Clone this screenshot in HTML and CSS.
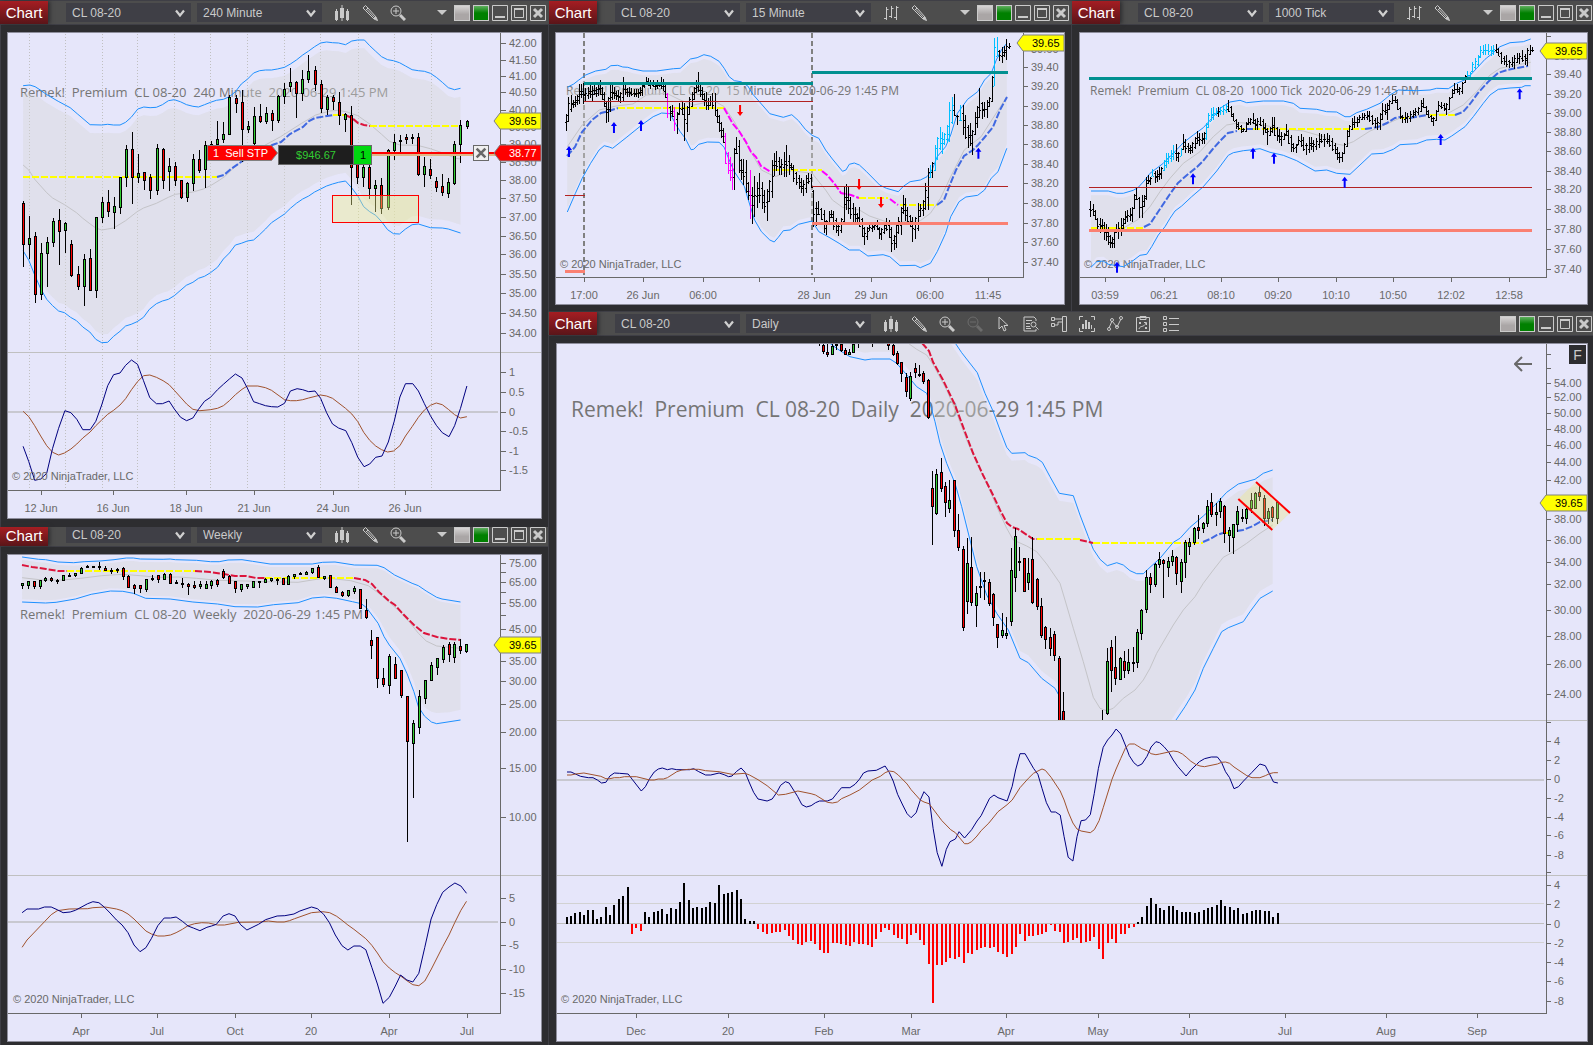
FILE: index.html
```html
<!DOCTYPE html>
<html lang="en">
<head>
    <meta charset="utf-8">
    <title>CL 08-20 Charts</title>
    <link rel="stylesheet" href="styles.css">
</head>
<body>
    <svg class="sprite" aria-hidden="true">
        <symbol id="i-chevron" viewBox="0 0 10 8"><path d="M1 1.500l4 5 4-5" fill="none" stroke="#d0d0d0" stroke-width="2.200"/></symbol>
        <symbol id="i-candles" viewBox="0 0 16 16"><path d="M1 6h3v9H1zM6 3h4v10H6zM12 6h3v9h-3z"/><path d="M2.500 4v12M8 0v16M13.500 4v12" class="thin"/></symbol>
        <symbol id="i-bars" viewBox="0 0 16 16"><path class="thin" d="M3.500 2v13M1 13.500h2M3.500 4.500h2M8.500 1v12M6 11.500h2M8.500 3.500h2M13.500 1v14M11 12.500h2M13.500 2.500h2"/></symbol>
        <symbol id="i-pencil" viewBox="0 0 16 16"><path class="thin" d="M1 3l2.500-2.500L6 3 3.500 5.500zM3.500 5.500L12 14l3.500 1.500L14 12 6 3M5 4.500l8 8.500M12 14l2-2"/><path d="M12.500 13.500l1.500-1.500 1.500 3.500z"/></symbol>
        <symbol id="i-zoom-in" viewBox="0 0 16 16"><circle class="thin" cx="6" cy="6" r="5"/><path class="thin" d="M3 6h6M6 3v6"/><path class="thick" d="M10 10l5 5"/></symbol>
        <symbol id="i-zoom-out" viewBox="0 0 16 16"><circle class="thin" cx="6" cy="6" r="5"/><path class="thin" d="M3 6h6"/><path class="thick" d="M10 10l5 5"/></symbol>
        <symbol id="i-cursor" viewBox="0 0 16 16"><path class="thin" d="M4 1v12l3-3 2 5 2-1-2-4.500h4z"/></symbol>
        <symbol id="i-report" viewBox="0 0 16 16"><path class="thin" d="M13 5V3l-2-2H1v14h12v-2M3 4.500h6M3 7.500h4M3 10.500h4M3 12.500h5"/><circle class="thin" cx="10.500" cy="8.500" r="2.500"/><path class="thin" d="M12.500 10.500l3 3"/></symbol>
        <symbol id="i-trader" viewBox="0 0 16 16"><path class="thin" d="M11.500 .5h4v15h-4zM.5 1.500h3v3h-3zM.5 7.500h3v3h-3zM4 3h7M4 9h3V6h4"/></symbol>
        <symbol id="i-indicator" viewBox="0 0 16 16"><path class="thin" d="M.5 4V.5H4M12 .5h3.500V4M15.500 12v3.500H12M4 15.500H.5V12"/><path d="M3 8h2v5H3zM6 4h2v9H6zM9 6h2v7H9zM12 9h1v4h-1z"/></symbol>
        <symbol id="i-strategy" viewBox="0 0 16 16"><path class="thin" d="M2 12l3-7 5 6 4-8"/><circle class="thin" cx="2" cy="13" r="1.500"/><circle class="thin" cx="5" cy="4" r="1.500"/><circle class="thin" cx="10" cy="11" r="1.500"/><circle class="thin" cx="14" cy="2" r="1.500"/></symbol>
        <symbol id="i-clipboard" viewBox="0 0 16 16"><path class="thin" d="M1.500 1.500h13v14h-13zM5 .5h6v3H5zM4 6l2 2M6 6l-2 2M10 11l2 2M12 11l-2 2M4 13c1-4 5-1 7-6M9 6.500h2.500V9"/></symbol>
        <symbol id="i-list" viewBox="0 0 16 16"><path class="thin" d="M.5 .5h3v3h-3zM.5 6.500h3v3h-3zM.5 12.500h3v3h-3zM6 2.500h10M6 8.500h10M6 14.500h10"/></symbol>
        <symbol id="i-minimize" viewBox="0 0 16 16"><path class="thin" d="M.5 .5h15v15H.5z"/><path d="M3 11h10v2H3z"/></symbol>
        <symbol id="i-maximize" viewBox="0 0 16 16"><path class="thin" d="M.5 .5h15v15H.5zM3.500 4.500h9v8h-9z"/><path d="M3 3h10v2H3z"/></symbol>
        <symbol id="i-close" viewBox="0 0 16 16"><path class="thin" d="M.5 .5h15v15H.5z"/><path d="M4 4l8 8M12 4l-8 8" fill="none" stroke="currentColor" stroke-width="3"/></symbol>
    </svg>

    <div class="desktop">
        <div class="column left">
            <section class="window tall-foot">
                <header class="toolbar">
                    <span class="tab">Chart</span>
                    <div class="picker"><select aria-label="Instrument"><option>CL 08-20</option></select><svg><use href="#i-chevron"/></svg></div>
                    <div class="picker"><select aria-label="Interval"><option>240 Minute</option></select><svg><use href="#i-chevron"/></svg></div>
                    <div class="tools">
                        <button aria-label="Chart style"><svg><use href="#i-candles"/></svg></button>
                        <button aria-label="Drawing tools"><svg><use href="#i-pencil"/></svg></button>
                        <button aria-label="Zoom in"><svg><use href="#i-zoom-in"/></svg></button>
                    </div>
                    <button class="more" aria-label="More tools"></button>
                    <div class="window-buttons">
                        <button class="link" aria-label="Instrument link"></button>
                        <button class="link green" aria-label="Interval link"></button>
                        <button aria-label="Minimize"><svg><use href="#i-minimize"/></svg></button>
                        <button aria-label="Maximize"><svg><use href="#i-maximize"/></svg></button>
                        <button aria-label="Close"><svg><use href="#i-close"/></svg></button>
                    </div>
                </header>
                <div class="chart">
                    <svg id="minute240" viewBox="8 33 533 485" preserveAspectRatio="xMinYMin"></svg>
                    <button class="cancel-order" aria-label="Cancel order"><svg viewBox="0 0 16 16"><path d="M3 3l10 10M13 3L3 13"/></svg></button>
                </div>
            </section>

            <section class="window clipped">
                <header class="toolbar">
                    <span class="tab">Chart</span>
                    <div class="picker"><select aria-label="Instrument"><option>CL 08-20</option></select><svg><use href="#i-chevron"/></svg></div>
                    <div class="picker"><select aria-label="Interval"><option>Weekly</option></select><svg><use href="#i-chevron"/></svg></div>
                    <div class="tools">
                        <button aria-label="Chart style"><svg><use href="#i-candles"/></svg></button>
                        <button aria-label="Drawing tools"><svg><use href="#i-pencil"/></svg></button>
                        <button aria-label="Zoom in"><svg><use href="#i-zoom-in"/></svg></button>
                    </div>
                    <button class="more" aria-label="More tools"></button>
                    <div class="window-buttons">
                        <button class="link" aria-label="Instrument link"></button>
                        <button class="link green" aria-label="Interval link"></button>
                        <button aria-label="Minimize"><svg><use href="#i-minimize"/></svg></button>
                        <button aria-label="Maximize"><svg><use href="#i-maximize"/></svg></button>
                        <button aria-label="Close"><svg><use href="#i-close"/></svg></button>
                    </div>
                </header>
                <div class="chart">
                    <svg id="weekly" viewBox="8 555 533 486" preserveAspectRatio="xMinYMin"></svg>
                </div>
            </section>
        </div>

        <div class="column right">
            <div class="pair">
                <section class="window mid-foot">
                    <header class="toolbar">
                        <span class="tab">Chart</span>
                        <div class="picker"><select aria-label="Instrument"><option>CL 08-20</option></select><svg><use href="#i-chevron"/></svg></div>
                        <div class="picker"><select aria-label="Interval"><option>15 Minute</option></select><svg><use href="#i-chevron"/></svg></div>
                        <div class="tools">
                            <button aria-label="Chart style"><svg><use href="#i-bars"/></svg></button>
                            <button aria-label="Drawing tools"><svg><use href="#i-pencil"/></svg></button>
                        </div>
                        <button class="more" aria-label="More tools"></button>
                        <div class="window-buttons">
                            <button class="link" aria-label="Instrument link"></button>
                            <button class="link green" aria-label="Interval link"></button>
                            <button aria-label="Minimize"><svg><use href="#i-minimize"/></svg></button>
                            <button aria-label="Maximize"><svg><use href="#i-maximize"/></svg></button>
                            <button aria-label="Close"><svg><use href="#i-close"/></svg></button>
                        </div>
                    </header>
                    <div class="chart">
                        <svg id="minute15" viewBox="556 33 508 271" preserveAspectRatio="xMinYMin"></svg>
                    </div>
                </section>

                <section class="window mid-foot edge">
                    <header class="toolbar">
                        <span class="tab">Chart</span>
                        <div class="picker"><select aria-label="Instrument"><option>CL 08-20</option></select><svg><use href="#i-chevron"/></svg></div>
                        <div class="picker"><select aria-label="Interval"><option>1000 Tick</option></select><svg><use href="#i-chevron"/></svg></div>
                        <div class="tools">
                            <button aria-label="Chart style"><svg><use href="#i-bars"/></svg></button>
                            <button aria-label="Drawing tools"><svg><use href="#i-pencil"/></svg></button>
                        </div>
                        <button class="more" aria-label="More tools"></button>
                        <div class="window-buttons">
                            <button class="link" aria-label="Instrument link"></button>
                            <button class="link green" aria-label="Interval link"></button>
                            <button aria-label="Minimize"><svg><use href="#i-minimize"/></svg></button>
                            <button aria-label="Maximize"><svg><use href="#i-maximize"/></svg></button>
                            <button aria-label="Close"><svg><use href="#i-close"/></svg></button>
                        </div>
                    </header>
                    <div class="chart">
                        <svg id="tick1000" viewBox="1080 33 507 271" preserveAspectRatio="xMinYMin"></svg>
                    </div>
                </section>
            </div>

            <section class="window edge">
                <header class="toolbar">
                    <span class="tab">Chart</span>
                    <div class="picker"><select aria-label="Instrument"><option>CL 08-20</option></select><svg><use href="#i-chevron"/></svg></div>
                    <div class="picker"><select aria-label="Interval"><option>Daily</option></select><svg><use href="#i-chevron"/></svg></div>
                    <div class="tools">
                        <button aria-label="Chart style"><svg><use href="#i-candles"/></svg></button>
                        <button aria-label="Drawing tools"><svg><use href="#i-pencil"/></svg></button>
                        <button aria-label="Zoom in"><svg><use href="#i-zoom-in"/></svg></button>
                        <button aria-label="Zoom out" disabled><svg><use href="#i-zoom-out"/></svg></button>
                        <button aria-label="Cursor"><svg><use href="#i-cursor"/></svg></button>
                        <button aria-label="Data box"><svg><use href="#i-report"/></svg></button>
                        <button aria-label="Chart trader"><svg><use href="#i-trader"/></svg></button>
                        <button aria-label="Indicators"><svg><use href="#i-indicator"/></svg></button>
                        <button aria-label="Data series"><svg><use href="#i-strategy"/></svg></button>
                        <button aria-label="Strategies"><svg><use href="#i-clipboard"/></svg></button>
                        <button aria-label="Properties"><svg><use href="#i-list"/></svg></button>
                    </div>
                    <div class="window-buttons">
                        <button class="link" aria-label="Instrument link"></button>
                        <button class="link green" aria-label="Interval link"></button>
                        <button aria-label="Minimize"><svg><use href="#i-minimize"/></svg></button>
                        <button aria-label="Maximize"><svg><use href="#i-maximize"/></svg></button>
                        <button aria-label="Close"><svg><use href="#i-close"/></svg></button>
                    </div>
                </header>
                <div class="chart">
                    <svg id="daily" viewBox="557 344 1030 697" preserveAspectRatio="xMinYMin"></svg>
                    <button class="scroll-back" aria-label="Return to last bar"><svg viewBox="0 0 18 16"><path d="M18 8H1M8 1L1 8l7 7"/></svg></button>
                    <button class="fixed-scale">F</button>
                </div>
            </section>
        </div>
    </div>

    <script src="charts.js"></script>
</body>
</html>
```

FILE: styles.css
```css
* {
    box-sizing: border-box;
}

body {
    margin: 0;
    background: #2d2d30;
    font-family: "Liberation Sans", Arial, sans-serif;
    font-size: 12px;
    overflow: hidden;
}

.sprite {
    display: none;
}

button {
    padding: 0;
    border: 0;
    background: none;
    color: #cacaca;
    cursor: pointer;
}

button svg {
    display: block;
    width: 16px;
    height: 16px;
    fill: currentColor;
}

.thin {
    fill: none;
    stroke: currentColor;
    stroke-width: 1;
}

.thick {
    fill: none;
    stroke: currentColor;
    stroke-width: 3;
}

/* Window layout */

.desktop {
    display: grid;
    grid-template-columns: 548fr 1045fr;
    height: 100vh;
}

.column {
    display: grid;
    min-width: 0;
    min-height: 0;
}

.left {
    grid-template-rows: 527fr 518fr;
}

.right {
    grid-template-rows: 311fr 734fr;
}

.pair {
    display: grid;
    grid-template-columns: 523fr 522fr;
    min-height: 0;
}

.window {
    display: flex;
    flex-direction: column;
    min-width: 0;
    min-height: 0;
    padding-bottom: 3px;
    border-top: 1px solid #3f3f46;
    box-shadow: inset 1px 0 #3f3f46;
}

.tall-foot {
    padding-bottom: 8px;
}

.mid-foot {
    padding-bottom: 6px;
}

.clipped {
    border-top: 0;
}

/* Toolbar */

.toolbar {
    display: flex;
    align-items: center;
    flex: none;
    height: 24px;
    padding: 0 2px 0 1px;
    background: #4d4d4d;
    border-bottom: 1px solid #3f3f46;
}

.left .toolbar {
    padding-left: 0;
}

.edge .toolbar {
    padding-right: 1px;
}

.clipped .toolbar {
    align-items: flex-start;
    height: 20px;
}

.tab {
    display: flex;
    align-items: center;
    justify-content: center;
    align-self: stretch;
    width: 48px;
    margin-right: 12px;
    background: linear-gradient(#a51d22, #5a1519);
    box-shadow: 2px 0 4px #2d2d30;
    color: #fff;
    font-size: 15px;
}

.clipped .tab {
    padding-bottom: 3px;
}

.picker {
    display: grid;
    width: 125px;
    margin-left: 6px;
    align-items: center;
}

.picker select,
.picker svg {
    grid-area: 1 / 1;
}

.picker select {
    appearance: none;
    height: 19px;
    padding: 0 6px;
    border: 0;
    border-radius: 0;
    background: #3f3f46;
    color: #cacaca;
    font: 12px "Liberation Sans", Arial, sans-serif;
}

.clipped .picker select {
    height: 16px;
}

.picker svg {
    justify-self: end;
    width: 10px;
    height: 8px;
    margin-right: 6px;
    pointer-events: none;
}

.tools {
    display: flex;
    gap: 12px;
    margin-left: 12px;
}

.tools button:disabled {
    color: #6c6c6c;
}

.more {
    width: 0;
    height: 0;
    margin-left: auto;
    margin-right: 7px;
    border: 5px solid transparent;
    border-top: 5px solid #cacaca;
    border-bottom: 0;
}

.clipped .more {
    margin-top: 5px;
}

.window-buttons {
    display: flex;
    gap: 3px;
    margin-left: auto;
}

.more + .window-buttons {
    margin-left: 0;
}

.link {
    width: 16px;
    height: 16px;
    border: 1px solid #cacaca;
    background: linear-gradient(#d6d4d4, #aaa6a6 60%);
}

.link.green {
    background: linear-gradient(#5fae5f, #008000 50%);
}

/* Chart */

.chart {
    position: relative;
    flex: 1;
    min-height: 0;
    margin: 7px 6px 0 7px;
    border: 1px solid #8e8e9c;
    background: #e6e6fa;
}

.edge .chart {
    margin-left: 8px;
    margin-right: 5px;
}

.chart > svg {
    display: block;
    width: 100%;
    height: 100%;
}

.chart text {
    white-space: pre;
}

.axis-label,
.copyright,
.tag-text {
    font-size: 11px;
    fill: #696969;
}

.tag-text {
    fill: #000;
}

.tag-text.light {
    fill: #fff;
}

.tag-text.profit {
    fill: #32cd32;
}

.watermark {
    font-family: "Open Sans", sans-serif;
    font-size: 13px;
    fill: #757575;
}

.watermark.small {
    font-size: 12px;
}

.watermark.large {
    font-size: 21px;
}

.cancel-order {
    position: absolute;
    left: 465px;
    top: 112px;
    border: 1px solid #696969;
    background: #f0f0f0;
}

.cancel-order svg {
    width: 14px;
    height: 14px;
    fill: none;
    stroke: #696969;
    stroke-width: 3;
}

.scroll-back {
    position: absolute;
    right: 55px;
    top: 12px;
}

.scroll-back svg {
    width: 18px;
    fill: none;
    stroke: #696969;
    stroke-width: 2;
}

.fixed-scale {
    position: absolute;
    right: 1px;
    top: 1px;
    width: 17px;
    height: 19px;
    background: #2d2d30;
    font: 14px "Liberation Sans", Arial, sans-serif;
}
```

FILE: charts.js
```js
const NS = 'http://www.w3.org/2000/svg';
const BLUE = '#1e90ff', TREND = '#4169e1', YELLOW = '#ffff00', CRIMSON = '#dc143c', PINK = '#ff00ff';
const AXIS = '#696969', GRID = '#c0c0c0';

// A frame turns stored plot units into chart pixels
const frame = (x0, y0, sx) => (x, y) => [x0 + x / sx, y0 + y / 3];

function el(parent, name, attrs, text) {
    const node = document.createElementNS(NS, name);
    for (const key in attrs) node.setAttribute(key, attrs[key]);
    if (text !== undefined) node.textContent = text;
    parent.appendChild(node);
    return node;
}

const parse = str => str.trim().split(/\s+/).map(p => p.split(',').map(Number));
const toPoints = (f, pts, dy = 0) => pts.map(([x, y]) => f(x, y + dy).map(v => v.toFixed(1)).join(',')).join(' ');
const snap = v => Math.round(v);

function line(g, f, str, color, width = 1) {
    return el(g, 'polyline', { points: toPoints(f, parse(str)), fill: 'none', stroke: color, 'stroke-width': width });
}

// Two pixel dashes sit on whole pixels so the flat stretches stay sharp
function dashes(g, f, parts) {
    parts.forEach(([color, str]) => {
        const points = parse(str).map(([x, y]) => f(x, y).map(snap).join(',')).join(' ');
        el(g, 'polyline', { points, fill: 'none', stroke: color, 'stroke-width': 2, 'stroke-dasharray': '7 2' });
    });
}

function box(g, x, y, w, h, fill) {
    el(g, 'rect', { x: snap(x), y: snap(y), width: w, height: Math.max(1, snap(h)), fill: fill, 'shape-rendering': 'crispEdges' });
}

function level(g, f, x1, x2, y, color, width) {
    const a = f(x1, y), b = f(x2, y);
    box(g, a[0], a[1] - width / 2, snap(b[0] - a[0]), width, color);
}

// Shaded channel, pulled in from its two outer lines
function channel(g, f, c) {
    const top = toPoints(f, parse(c.upper), c.inset);
    const low = toPoints(f, parse(c.bandLow || c.lower).reverse(), c.bandLow ? 0 : -c.inset);
    el(g, 'polygon', { points: top + ' ' + low, fill: '#d7d7d7', 'fill-opacity': 0.4 });
    line(g, f, c.mid, '#c4c4c8');
    line(g, f, c.upper, BLUE);
    line(g, f, c.lower, BLUE);
}

function candle(g, f, x, h, t, b, l, up) {
    const cx = snap(f(x, 0)[0]);
    const [yh, yt, yb, yl] = [h, t, b, l].map(v => snap(f(x, v)[1]));
    box(g, cx, yh, 1, yl - yh, '#000');
    box(g, cx - 1, yt, 3, yb - yt + 1, '#000');
    if (yb - yt > 1) box(g, cx, yt + 1, 1, yb - yt - 1, up ? '#32cd32' : '#ff0000');
}

// "x high low [color]" bars with open and close ticks
function ohlc(g, f, str) {
    const bars = str.split(';').map(s => s.trim().split(' '));
    const colors = { c: '#00bfff', m: '#ff00ff' };
    bars.forEach(([x, h, l, k], i) => {
        h = +h; l = +l;
        const next = bars[i + 1] || bars[i], prev = bars[i - 1] || bars[i];
        const clamp = v => Math.min(l - 3, Math.max(h + 3, v));
        const open = clamp((+prev[1] + +prev[2]) / 2), close = clamp((+next[1] + +next[2]) / 2);
        const [px, yh] = f(+x, h), yl = f(0, l)[1], color = colors[k] || '#000', cx = snap(px);
        box(g, cx, yh, 1, yl - yh, color);
        box(g, cx - 1, f(0, open)[1], 1, 1, color);
        box(g, cx + 1, f(0, close)[1], 1, 1, color);
    });
}

function arrow(g, f, x, y, up) {
    const [px, py] = f(x, y), d = up ? 1 : -1;
    el(g, 'path', {
        d: `M${px} ${py}l3 ${4 * d}h-2v${7 * d}h-2v${-7 * d}h-2z`,
        fill: up ? '#0000ff' : '#ff0000'
    });
}

function priceAxis(g, f, x, labels) {
    labels.forEach(([y, text]) => {
        const [px, py] = f(x, y);
        box(g, px, py, 5, 1, AXIS);
        if (text) el(g, 'text', { x: snap(px) + 8, y: snap(py) + 4, class: 'axis-label' }, text);
    });
}

function timeAxis(g, f, y, labels) {
    labels.forEach(([x, text]) => {
        const [px, py] = f(x, y);
        box(g, px, py, 1, 5, AXIS);
        if (text) el(g, 'text', { x: snap(px), y: snap(py) + 22, 'text-anchor': 'middle', class: 'axis-label' }, text);
    });
}

function axisLines(g, left, x, top, bottom) {
    box(g, x, top, 1, bottom - top, AXIS);
    box(g, left, bottom, x - left + 1, 1, AXIS);
}

function priceTag(g, x, y, text, fill, cls) {
    el(g, 'path', { d: `M${x} ${y}l6 -8h41v16h-41z`, fill: fill, stroke: '#808080' });
    el(g, 'text', { x: x + 15, y: y + 4, class: 'tag-text ' + cls }, text);
}

const watermark = (g, x, y, text, cls = '') => el(g, 'text', { x, y, class: 'watermark ' + cls }, text);
const copyright = (g, x, y) => el(g, 'text', { x, y, class: 'copyright' }, '© 2020 NinjaTrader, LLC');

/* 240 minute */
function drawMinute240() {
    const g = document.getElementById('minute240');
    const f = frame(0, 0, 2.851), m = frame(0, 180, 2.851);
    [82, 184, 290, 392, 497, 600, 705, 811, 913, 1020, 1122, 1228].forEach(x => {
        const px = snap(x / 2.851) + 0.5;
        el(g, 'line', { x1: px, x2: px, y1: 34, y2: 488, stroke: GRID, 'stroke-dasharray': '1 2' });
    });
    watermark(g, 20, 97, 'Remek!  Premium  CL 08-20  240 Minute  2020-06-29 1:45 PM');
    channel(g, f, {
        inset: 25,
        upper: '66,257 85,255 100,260 115,270 132,283 166,304 200,323 220,341 257,374 290,375 307,373 324,375 342,375 358,367 374,352 393,327 410,321 428,323 446,322 463,314 480,302 497,299 514,305 532,314 550,319 566,321 583,314 600,307 617,301 637,298 654,290 671,275 688,252 705,238 723,219 740,212 757,210 774,210 791,207 811,202 828,192 845,180 863,165 880,153 897,140 914,129 931,126 948,128 965,129 985,134 1003,123 1020,120 1039,120 1054,137 1071,154 1088,170 1105,179 1122,182 1139,188 1156,198 1175,209 1193,212 1210,214 1227,220 1244,232 1261,247 1278,263 1296,269 1313,265',
        lower: '66,752 82,781 99,825 116,866 133,898 150,917 167,933 184,938 201,952 218,962 236,981 256,996 273,1018 290,1028 307,1027 324,1009 342,994 358,978 374,973 391,965 409,952 426,928 446,911 463,903 480,898 497,887 531,856 550,847 566,835 583,829 600,818 620,802 637,777 654,759 671,735 688,730 705,723 723,720 740,704 757,687 774,668 811,642 828,625 845,610 863,597 880,588 897,576 914,567 931,558 948,552 965,547 985,543 1003,564 1020,588 1037,620 1054,635 1071,646 1088,665 1105,689 1122,701 1139,702 1156,687 1175,674 1193,672 1227,683 1261,684 1278,687 1313,699',
        mid: '66,495 82,510 99,538 133,578 150,594 184,614 218,638 236,655 256,671 273,684 290,690 307,687 324,684 358,662 391,635 409,624 446,610 480,592 500,583 550,576 580,567 600,557 625,541 640,530 670,500 700,475 730,450 800,410 860,370 900,345 940,333 965,331 990,336 1020,347 1054,372 1088,403 1110,424 1140,435 1190,436 1227,446 1260,458 1300,475 1313,477'
    });
    dashes(g, f, [
        [YELLOW, '66,530 620,530'],
        [TREND, '620,530 640,524 660,508 688,487 710,470 760,440 785,433 800,425 828,402 863,380 880,363 897,353 948,345'],
        [YELLOW, '948,345 985,345'],
        [CRIMSON, '985,345 1003,355 1020,370 1037,376 1054,378'],
        [YELLOW, '1054,379 1313,379']
    ]);
    // high top bottom low up
    `603 610 733 800 0;648 715 733 777 1;697 708 881 908 0;729 760 881 899 1;712 727 760 860 1;654 664 727 741 1;627 661 694 794 0;666 670 691 758 1;721 733 824 830 0;798 823 859 869 0;762 778 859 917 1;747 775 871 871 0;652 652 871 893 1;592 607 652 669 1;570 607 632 650 0;591 619 635 687 1;530 532 622 641 1;435 447 530 560 1;397 447 530 612 0;462 519 530 548 1;517 517 541 570 0;522 530 571 596 0;432 444 571 584 1;444 446 540 566 0;474 499 512 572 1;487 499 540 558 0;540 540 592 596 0;546 550 592 605 1;462 478 550 573 1;450 478 511 520 0;424 436 508 564 1;424 432 450 456 1;363 418 432 440 1;367 402 418 430 1;285 292 403 403 1;286 295 308 340 0;270 307 386 487 0;364 378 386 400 1;321 349 430 445 1;312 349 362 368 0;322 339 364 372 1;330 339 361 392 0;285 289 361 368 1;249 267 289 312 1;204 247 258 276 1;242 247 280 353 0;210 238 280 302 1;165 213 238 250 1;198 210 253 273 0;240 253 325 340 0;285 291 328 345 1;285 292 304 330 0;277 307 344 374 0;338 343 356 397 1;319 346 500 614 0;480 490 532 552 0;480 500 532 562 1;495 500 565 596 0;540 556 565 635 1;535 555 623 641 0;448 451 622 630 1;403 427 451 480 1;406 420 424 457 1;402 411 418 432 0;402 411 415 432 1;400 411 521 527 0;471 499 521 562 1;477 507 524 536 0;530 544 560 577 0;522 558 576 587 0;535 547 578 595 1;424 433 548 555 1;361 376 433 488 1;361 364 377 386 1`
        .split(';').forEach((row, i) => candle(g, f, 65 + i * 17.33, ...row.split(' ').map(Number)));

    // Demand zone
    el(g, 'rect', { x: 332.5, y: 195.5, width: 86, height: 27, fill: '#f0f08c', 'fill-opacity': 0.4, stroke: '#ff0000' });

    // Oscillator
    box(g, 8, 352, 533, 1, GRID);
    box(g, 8, 411, 490, 2, '#c8c8d0');
    line(g, m, '66,694 82,710 99,737 116,768 133,797 150,817 167,825 184,819 202,807 219,792 236,774 257,756 273,737 290,720 307,703 324,691 342,675 358,656 375,629 392,605 409,587 427,585 446,592 465,602 482,614 497,631 532,672 550,688 570,692 600,689 620,685 637,677 654,662 671,644 690,628 705,618 735,618 757,623 774,631 811,659 828,662 845,662 863,659 880,654 914,645 931,648 948,655 985,685 1003,702 1020,725 1037,757 1054,781 1071,798 1088,809 1105,816 1122,813 1140,797 1156,768 1175,740 1193,712 1210,690 1227,676 1244,669 1261,674 1278,688 1296,704 1313,714 1331,710', '#a0522d');
    line(g, m, '66,799 82,845 99,901 116,897 133,880 150,805 167,745 185,692 202,698 219,718 236,749 257,749 273,724 290,675 307,617 324,584 342,579 358,556 375,540 392,553 409,602 427,653 446,671 463,671 482,663 497,687 515,712 532,722 550,714 566,688 583,664 600,652 620,629 637,613 654,597 671,582 690,594 705,624 723,665 740,671 757,677 774,680 792,681 811,670 828,633 847,626 863,629 880,635 898,633 914,655 931,698 948,732 965,744 986,752 1003,788 1020,832 1038,860 1054,852 1071,832 1089,828 1107,786 1124,724 1140,651 1156,611 1177,611 1193,633 1210,671 1227,707 1244,736 1261,758 1280,770 1296,737 1313,685 1331,618', '#000080');
    copyright(g, 12, 480);

    axisLines(g, 8, 500, 33, 490);
    priceAxis(g, f, 1427, [[128, '42.00'], [179, '41.50'], [227, '41.00'], [277, '40.50'], [329, '40.00'], [380, '39.50'], [433, '39.00'], [487, '38.50'], [539, '38.00'], [595, '37.50'], [650, '37.00'], [707, '36.50'], [761, '36.00'], [821, '35.50'], [878, '35.00'], [939, '34.50'], [998, '34.00'], [1116, '1'], [1175, '0.5'], [1235, '0'], [1292, '-0.5'], [1352, '-1'], [1411, '-1.5']]);
    timeAxis(g, f, 1471, [[116, '12 Jun'], [323, '16 Jun'], [531, '18 Jun'], [723, '21 Jun'], [948, '24 Jun'], [1156, '26 Jun']]);

    // Working stop order and open position
    box(g, 371, 154, 130, 2, '#deb887');
    box(g, 371, 152, 130, 2, '#ff0000');
    el(g, 'path', { d: 'M207.5 145.500h64l6 7.500l-6 7.500h-64z', fill: '#ff0000', stroke: '#808080' });
    el(g, 'text', { x: 213, y: 157, class: 'tag-text light' }, '1  Sell STP');
    el(g, 'rect', { x: 278.5, y: 145.5, width: 75, height: 19, fill: '#1e1e1e', stroke: '#696969' });
    el(g, 'rect', { x: 353.5, y: 145.5, width: 18, height: 19, fill: '#00d80f', stroke: '#696969' });
    el(g, 'text', { x: 316, y: 159, 'text-anchor': 'middle', class: 'tag-text profit' }, '$946.67');
    el(g, 'text', { x: 363, y: 159, 'text-anchor': 'middle', class: 'tag-text' }, '1');
    priceTag(g, 494, 121, '39.65', '#ffff00', '');
    priceTag(g, 494, 153, '38.77', '#ff0000', 'light');
}

/* 15 minute */
function drawMinute15() {
    const g = document.getElementById('minute15');
    const f = frame(545, 0, 2.958);
    watermark(g, 566, 95, 'Remek!  Premium  CL 08-20  15 Minute  2020-06-29 1:45 PM', 'small');
    [115, 790].forEach(x => {
        const px = snap(f(x, 0)[0]);
        el(g, 'line', { x1: px, x2: px, y1: 33, y2: 275, stroke: '#808080', 'stroke-width': 2, 'stroke-dasharray': '5 3' });
    });
    copyright(g, 560, 268);
    channel(g, f, {
        inset: 13,
        upper: '66,262 85,252 100,240 120,225 150,213 180,208 195,197 215,196 230,201 245,202 260,207 290,213 330,213 380,206 400,205 430,177 450,173 470,164 490,169 515,184 530,205 545,230 560,242 580,245 600,258 615,283 640,312 665,341 705,352 730,344 750,362 770,388 790,406 810,415 830,450 850,477 880,514 890,510 900,493 915,489 930,495 950,514 990,555 1010,565 1045,575 1060,559 1080,545 1110,540 1130,530 1145,510 1160,470 1185,440 1200,405 1220,340 1250,298 1280,275 1300,240 1320,220 1335,180 1350,150 1366,130',
        lower: '66,636 90,580 110,535 135,490 160,450 175,437 190,441 200,445 240,413 290,372 320,350 345,339 370,341 385,370 400,395 415,415 432,449 440,448 455,433 480,426 515,427 530,442 545,480 560,515 590,560 600,595 620,660 640,695 665,720 678,726 690,712 705,692 725,690 750,673 790,663 810,695 840,712 870,730 900,750 930,750 955,768 1000,764 1020,770 1050,797 1095,796 1110,803 1140,790 1160,755 1185,700 1200,650 1225,605 1245,591 1280,586 1300,570 1320,535 1340,515 1366,445',
        mid: '66,440 110,375 160,330 210,318 260,312 300,285 360,280 400,300 440,315 500,302 530,320 560,365 600,440 640,510 680,530 730,512 790,520 830,570 850,600 880,622 930,630 960,648 1000,662 1030,672 1060,665 1110,662 1140,640 1170,595 1200,530 1240,450 1290,410 1366,290'
    });
    dashes(g, f, [
        [TREND, '66,468 90,440 110,395 140,360 165,338 190,332 215,323'],
        [YELLOW, '215,324 530,324'],
        [PINK, '530,324 545,350 555,373 575,393 595,425 610,455 625,472 640,497 655,507 668,516'],
        [YELLOW, '675,510 820,510'],
        [PINK, '820,512 835,525 855,550 875,578 905,585 930,593'],
        [YELLOW, '930,594 1015,594'],
        [PINK, '1020,596 1045,614'],
        [YELLOW, '1050,614 1160,614'],
        [TREND, '1160,614 1180,600 1195,560 1215,510 1240,468 1265,450 1280,435 1300,415 1325,380 1345,330 1366,290']
    ]);
    ohlc(g, f, '63 342 392;69 290 366;76 285 335;82 300 325;88 288 322;94 285 315;100 252 312;106 252 295;113 250 312;119 265 303;126 262 297;132 250 295;138 258 305;144 252 285;150 262 293;157 245 287;163 240 285;169 262 300;175 275 320;180 305 368;186 290 364;192 245 335;199 252 300;205 262 298;211 272 300;217 270 303;223 275 307;230 232 303;236 250 285;242 264 290;249 262 292;255 265 290;262 268 293;268 268 292;275 266 292;282 262 290;288 252 288;294 245 262;300 230 255;306 235 258;312 240 268;318 240 262;324 246 270;331 240 268;337 246 262;344 230 265;350 238 275;356 255 295;362 280 356 m;369 318 362;375 315 350;383 320 392 m;390 335 402;396 308 345;404 302 345;411 310 425;419 318 395;427 290 345;434 275 320;440 262 300;446 240 280;452 216 275;458 248 290;464 262 300;471 280 318;477 275 330;483 295 332;489 288 318;495 278 325;502 280 350;509 328 370;516 345 395;522 365 412;528 385 430;533 398 492 m;540 455 520 m;546 472 545 m;552 490 572 m;559 445 570;566 412 462;573 420 520;580 478 542;587 478 555;594 480 578;600 545 600;605 510 658 m;611 560 670;619 528 650;627 545 622;634 520 610;641 545 625;648 570 640;656 568 665;663 540 605;670 480 595;678 460 530;684 452 512;691 470 525;698 478 525;706 455 530;714 435 532;721 465 525;728 490 510;735 495 545;742 515 555;750 525 568;757 535 580;764 540 588;771 525 580;779 518 550;786 522 565;794 570 680;802 605 678;809 602 645;817 625 660;824 630 698;832 660 705;840 632 675;847 630 655;853 632 690;861 655 700;868 670 708;876 655 700;883 560 665;889 552 630;896 560 640;903 590 655;910 610 672;917 620 665;924 640 670;930 620 680;937 655 712;944 680 735;951 680 718;959 670 695;966 668 695;973 665 690;981 660 690;988 680 715;995 685 720;1003 668 700;1010 655 695;1017 660 715;1024 682 758;1031 705 750;1038 670 745;1045 650 700;1052 622 705;1058 584 640;1065 595 665;1072 620 672;1080 645 680;1087 650 725;1095 650 715;1103 610 695;1110 612 650;1117 600 648;1124 550 632;1132 505 632;1139 495 535 c;1146 485 532;1153 435 512 c;1160 410 480 c;1167 380 450 c;1174 395 460 c;1181 400 435 c;1188 375 430 c;1196 305 425 c;1203 290 370 c;1210 282 348;1219 345 375;1227 315 362 c;1235 315 405;1242 345 418;1250 375 445;1257 370 440;1264 390 465;1271 335 405;1278 318 385;1285 265 355;1292 305 355;1299 305 350;1306 300 355;1314 290 320;1323 228 305;1329 115 260 c;1337 112 170 c;1344 150 183;1351 140 188;1358 138 172;1365 118 180;1373 128 145');

    level(g, f, 115, 793, 250, '#009090', 3);
    level(g, f, 790, 1370, 217, '#009090', 3);
    level(g, f, 115, 793, 304, '#b22222', 1);
    level(g, f, 790, 1370, 559, '#b22222', 1);
    level(g, f, 59, 118, 586, '#b22222', 1);
    level(g, f, 790, 1370, 670, '#fa8072', 3);
    level(g, f, 59, 118, 814, '#fa8072', 3);

    [[71, 438], [204, 366], [284, 360], [1282, 443]].forEach(([x, y]) => arrow(g, f, x, y, true));
    [[577, 348], [929, 570], [994, 624]].forEach(([x, y]) => arrow(g, f, x, y, false));

    axisLines(g, 556, 1023, 33, 277);
    priceAxis(g, f, 1414, [[148, '39.60'], [202, '39.40'], [259, '39.20'], [317, '39.00'], [374, '38.80'], [433, '38.60'], [491, '38.40'], [550, '38.20'], [608, '38.00'], [668, '37.80'], [727, '37.60'], [787, '37.40']]);
    timeAxis(g, f, 832, [[114, '17:00'], [289, '26 Jun'], [466, '06:00'], [634, ''], [795, '28 Jun'], [963, '29 Jun'], [1140, '06:00'], [1310, '11:45']]);
    priceTag(g, 1017, 43, '39.65', '#ffff00', '');
}

/* 1000 tick */
function drawTick1000() {
    const g = document.getElementById('tick1000');
    const f = frame(1070, 0, 3);
    watermark(g, 1090, 95, 'Remek!  Premium  CL 08-20  1000 Tick  2020-06-29 1:45 PM', 'small');
    copyright(g, 1084, 268);
    channel(g, f, {
        inset: 13,
        upper: '63,573 115,573 140,580 160,580 190,571 205,562 225,540 240,520 280,490 310,460 340,428 370,405 400,383 430,350 450,325 480,306 510,301 530,308 580,303 640,303 670,310 690,325 740,328 770,335 800,336 825,350 840,350 860,338 890,328 930,310 960,285 985,270 1040,272 1080,270 1100,265 1135,266 1160,250 1190,237 1220,205 1245,178 1270,158 1290,140 1320,128 1360,125 1382,117',
        lower: '63,802 80,785 100,783 115,793 160,800 185,785 210,766 230,763 245,740 265,705 285,680 300,655 315,633 335,618 365,590 400,560 440,513 475,466 490,458 520,452 540,450 570,446 600,457 640,466 680,482 735,513 770,510 800,520 840,523 870,495 905,462 940,460 970,448 990,434 1040,431 1070,420 1100,418 1125,420 1145,408 1185,380 1210,350 1240,310 1260,285 1285,268 1320,264 1355,262 1365,257 1382,257',
        mid: '63,688 130,690 165,682 205,658 240,620 270,575 300,535 340,490 390,455 430,410 470,375 510,368 560,372 650,388 700,393 760,410 800,432 820,436 850,425 900,393 950,372 990,354 1060,344 1130,342 1180,315 1220,275 1260,225 1290,205 1340,195 1382,187'
    });
    dashes(g, f, [
        [YELLOW, '63,684 222,684'],
        [TREND, '222,682 240,672 265,635 300,582 325,550 350,525 380,500 400,483 425,450 450,423 475,400 500,392'],
        [YELLOW, '505,388 530,388'],
        [TREND, '530,387 550,386'],
        [YELLOW, '550,386 885,386'],
        [TREND, '885,386 925,381 950,370 975,355 990,352'],
        [YELLOW, '990,355 1020,355'],
        [TREND, '1020,353 1070,344'],
        [YELLOW, '1080,344 1155,345'],
        [TREND, '1155,345 1180,335 1200,312 1225,278 1255,245 1285,220 1310,211 1340,205 1375,197']
    ]);
    ohlc(g, f, '61 602 650;68 612 648;75 630 660;82 655 690;89 655 700;95 658 692;101 665 718;107 672 722;114 680 735;120 705 745;126 712 745;132 690 745;138 672 700;145 665 715;152 655 710;159 655 695;165 632 672;172 630 665;179 625 665;185 620 665;192 582 628;199 562 600;207 590 652;215 585 655;221 585 620;227 530 598;234 525 552;241 530 555;247 508 530 c;254 512 548;260 510 545;267 502 540;273 500 535;281 480 512 c;288 460 505 c;295 458 490 c;302 450 485 c;309 435 480 c;317 432 482;325 455 485;332 445 470 c;339 402 450;346 418 460;353 430 460;360 435 462;367 425 458;374 410 445;381 392 432;388 400 440;395 400 432;402 395 430;408 370 420 c;415 340 385 c;422 325 365 c;429 322 362 c;437 325 350 c;444 322 352;451 320 345 c;459 315 345 c;467 312 340 c;475 300 335;483 318 352;490 340 365;497 358 388;505 365 388;513 375 398;520 385 398;527 365 395;534 355 375;541 355 375;548 338 372;555 358 390;562 355 390;570 350 378;578 358 405;585 370 400;592 385 435;600 380 408;607 350 398;613 352 410;620 382 425;627 388 430;634 395 438;641 398 420;648 372 408;655 390 432;662 405 455;670 428 455;677 432 458;685 408 435;692 402 440;700 412 455;708 430 465;716 412 460;723 410 450;730 420 455;738 415 450;746 400 445;754 402 430;762 402 442;770 400 432;778 405 440;786 415 455;794 430 462;801 440 480;808 455 488;816 455 485;823 428 462;831 390 440;838 375 410;845 355 390;853 348 385;860 350 380;867 345 370;875 340 362;883 340 360;890 332 360;898 332 365;906 345 375;914 355 385;922 350 388;930 340 392;937 308 360;944 312 345;951 310 362;958 300 330;966 285 312;974 288 310;981 298 330;989 320 355;996 345 370;1004 335 368;1012 340 370;1020 332 365;1028 330 355;1036 325 348;1044 322 345;1052 300 335;1060 295 325;1067 318 345;1075 330 355;1082 345 365;1090 352 378;1098 330 362;1105 302 335;1113 305 325;1121 310 335;1129 308 345;1137 290 330;1145 268 295;1153 250 282;1160 252 280;1168 262 285;1175 245 280;1184 225 248;1192 212 235 c;1200 215 232 c;1207 185 215 c;1215 175 208 c;1223 165 200 c;1231 138 175 c;1238 135 165 c;1246 132 165 c;1254 132 165 c;1262 138 168 c;1270 135 165 c;1277 132 160;1285 145 170;1293 155 190;1301 168 195;1309 165 200;1317 180 205;1325 172 202;1332 165 208;1340 160 190;1348 158 190;1356 150 185;1364 162 195;1372 145 200;1380 135 165;1387 142 158');

    level(g, f, 57, 1385, 235, '#009090', 3);
    level(g, f, 57, 1385, 562, '#b22222', 1);
    level(g, f, 57, 1385, 691, '#fa8072', 3);
    [[141, 785], [369, 520], [549, 443], [612, 458], [824, 530], [1112, 402], [1349, 265]].forEach(([x, y]) => arrow(g, f, x, y, true));

    axisLines(g, 1080, 1546, 33, 277);
    priceAxis(g, f, 1429, [[109, ''], [168, '39.60'], [223, '39.40'], [281, '39.20'], [338, '39.00'], [395, '38.80'], [452, '38.60'], [512, '38.40'], [568, '38.20'], [628, '38.00'], [688, '37.80'], [748, '37.60'], [808, '37.40']]);
    timeAxis(g, f, 832, [[106, '03:59'], [281, '06:21'], [452, '08:10'], [625, '09:20'], [799, '10:10'], [969, '10:50'], [1143, '12:02'], [1318, '12:58']]);
    priceTag(g, 1540, 51, '39.65', '#ffff00', '');
}

/* Weekly */
function drawWeekly() {
    const g = document.getElementById('weekly');
    const f = frame(0, 515, 2.851), m = frame(0, 860, 2.851);
    watermark(g, 20, 619, 'Remek!  Premium  CL 08-20  Weekly  2020-06-29 1:45 PM');
    channel(g, f, {
        inset: 9,
        upper: '63,126 110,133 130,134 165,141 210,143 240,140 285,138 325,134 360,129 380,129 400,132 465,133 485,132 500,134 560,136 600,140 625,140 650,135 690,134 720,139 770,147 890,147 920,142 955,141 1010,150 1075,151 1095,158 1125,180 1175,205 1193,212 1215,228 1245,247 1260,252 1313,261',
        lower: '63,261 130,264 160,262 215,252 260,238 315,228 350,229 380,235 415,250 485,252 550,261 620,267 670,275 735,276 780,269 850,263 890,249 925,246 960,250 1005,260 1030,266 1045,278 1078,325 1095,365 1110,390 1140,430 1160,475 1180,530 1193,575 1210,603 1230,621 1245,626 1313,615',
        bandLow: '63,253 130,256 160,254 215,244 260,230 315,220 350,221 380,227 415,242 485,244 550,253 620,259 670,267 735,268 780,261 850,255 890,241 925,238 960,242 1005,252 1030,256 1045,265 1078,308 1095,340 1110,366 1140,406 1160,448 1180,500 1193,545 1210,576 1230,590 1245,594 1280,592 1313,584',
        mid: '63,188 120,195 180,195 230,190 290,182 350,178 400,182 450,187 510,186 560,190 620,196 700,198 760,200 850,202 890,195 930,189 1000,197 1050,212 1080,235 1110,262 1140,290 1170,325 1193,355 1215,378 1245,393 1313,400'
    });
    dashes(g, f, [
        [CRIMSON, '63,150 90,157 130,163 165,168 190,169'],
        [YELLOW, '190,168 555,168'],
        [CRIMSON, '555,168 600,171 640,177 670,182 700,184 730,188 755,188'],
        [YELLOW, '755,188 1010,188'],
        [CRIMSON, '1010,188 1040,195 1060,207 1080,232 1110,258 1125,270 1150,298 1180,330 1210,353 1245,366 1280,371 1313,376']
    ]);
    `203 205 209 221 1;199 199 209 223 1;198 199 214 221 0;196 196 214 223 1;187 190 196 201 1;186 190 196 202 0;192 195 197 206 1;181 181 196 196 1;174 181 183 187 1;174 175 181 186 1;155 158 173 177 1;150 153 156 158 1;153 153 155 158 1;141 153 157 165 1;153 160 166 168 0;160 166 168 177 0;158 161 166 173 1;156 160 184 194 0;180 184 215 218 0;208 211 219 236 0;210 211 220 234 0;192 193 223 231 1;180 188 191 197 1;181 181 193 204 0;175 178 191 194 1;175 178 205 207 0;196 201 203 206 1;190 203 206 220 0;203 206 212 239 0;197 209 215 222 0;198 208 214 221 1;199 208 220 220 1;196 199 211 223 1;191 196 208 215 0;163 169 187 191 0;181 182 203 207 0;198 199 220 233 0;207 208 221 230 1;207 208 214 223 1;198 199 215 220 1;198 199 201 218 1;190 193 200 202 1;188 190 194 202 1;190 191 194 209 1;190 190 208 210 0;180 183 206 207 1;178 178 184 191 1;171 174 177 180 1;168 170 176 180 1;158 160 170 178 1;150 157 185 187 0;183 184 188 194 1;180 181 215 217 0;213 217 230 233 0;228 232 239 245 0;226 226 239 245 1;213 220 228 238 1;222 222 278 283 0;252 286 305 312 0;345 376 389 432 0;366 367 490 518 0;458 490 506 516 0;417 424 511 537 1;425 447 488 490 0;465 466 541 548 0;543 544 677 980 0;615 625 685 849 1;525 544 637 656 1;495 496 550 567 1;442 451 496 499 1;430 430 455 479 1;391 395 433 444 1;380 387 418 440 0;380 388 425 444 1;373 393 404 418 0;388 388 407 413 1`
        .split(';').forEach((row, i) => candle(g, f, 62 + i * 16.9, ...row.split(' ').map(Number)));

    // Oscillator
    box(g, 8, 875, 533, 1, GRID);
    box(g, 8, 921, 490, 2, '#c8c8d0');
    line(g, m, '63,262 77,240 127,185 146,164 163,152 197,147 250,146 265,143 300,141 332,147 348,152 365,162 382,177 416,213 432,222 450,228 468,228 486,225 502,218 520,208 536,197 555,191 575,188 595,189 620,195 640,195 680,187 740,186 765,183 790,186 810,186 825,182 840,176 888,158 920,155 940,158 960,169 975,181 992,195 1009,208 1043,236 1060,256 1076,279 1092,305 1110,324 1127,338 1142,348 1160,362 1177,374 1194,377 1211,363 1230,327 1262,260 1280,225 1297,187 1314,151 1330,124', '#a0522d');
    line(g, m, '63,158 77,147 110,147 127,141 146,141 163,149 180,158 200,156 215,151 250,131 265,125 282,128 297,141 314,159 332,180 348,195 365,218 382,255 399,275 416,263 432,235 450,197 468,174 486,174 502,171 520,184 536,198 551,204 570,212 590,202 603,198 617,193 636,168 653,161 670,168 686,194 704,210 737,193 757,179 790,168 812,167 838,162 855,153 888,141 905,146 923,163 939,188 956,225 975,257 992,270 1009,258 1027,258 1043,269 1060,322 1076,372 1092,430 1110,412 1127,378 1142,345 1160,360 1177,366 1194,340 1211,262 1229,177 1245,134 1262,97 1280,81 1297,69 1314,78 1330,100', '#000080');
    copyright(g, 13, 1003);

    axisLines(g, 8, 500, 555, 1013);
    priceAxis(g, f, 1427, [[143, '75.00'], [170, ''], [200, '65.00'], [230, ''], [263, '55.00'], [301, ''], [341, '45.00'], [437, '35.00'], [497, '30.00'], [566, '25.00'], [650, '20.00'], [758, '15.00'], [905, '10.00']]);
    priceAxis(g, m, 1427, [[113, '5'], [185, '0'], [256, '-5'], [326, '-10'], [398, '-15']]);
    timeAxis(g, m, 460, [[230, 'Apr'], [449, 'Jul'], [669, 'Oct'], [888, '20'], [1108, 'Apr'], [1330, 'Jul']]);
    priceTag(g, 494, 645, '39.65', '#ffff00', '');
}

/* Daily */
function drawDaily() {
    const svg = document.getElementById('daily');
    const f = frame(780, 340, 3), p = frame(1060, 305, 2.942);
    const a = frame(545, 715, 2.958), b = frame(1060, 715, 2.942);
    const clip = el(svg, 'clipPath', { id: 'daily-price' });
    el(clip, 'rect', { x: 557, y: 344, width: 1030, height: 376 });
    const g = el(svg, 'g', { 'clip-path': 'url(#daily-price)' });

    watermark(g, 571, 417, 'Remek!  Premium  CL 08-20  Daily  2020-06-29 1:45 PM', 'large');
    channel(g, f, {
        inset: 22,
        upper: '480,-60 525,8 545,38 592,98 615,160 640,215 660,270 680,322 695,340 735,338 745,346 770,355 787,367 810,410 838,460 880,467 900,525 925,590 940,628 960,658 982,677 1010,668 1030,675 1050,692 1070,701 1090,701 1110,682 1140,655 1180,607 1200,595 1230,562 1270,528 1300,500 1340,457 1375,432 1425,418 1450,400 1478,390',
        lower: '100,-40 147,8 180,32 210,50 255,60 275,57 330,57 350,70 385,110 410,140 440,160 450,190 465,245 480,310 500,370 525,430 545,500 575,620 590,680 620,765 650,820 685,870 720,955 745,968 785,1015 825,1045 838,1068 848,1200 1150,1200 1188,1140 1215,1100 1245,1050 1270,985 1300,925 1325,875 1345,863 1390,845 1410,815 1440,775 1478,753',
        mid: '385,10 410,28 440,45 460,75 500,150 530,220 560,300 590,370 620,430 650,500 680,565 700,600 740,618 770,635 800,672 840,730 855,780 880,865 910,965 940,1072 960,1105 980,1112 1000,1105 1030,1075 1065,1050 1090,1020 1110,985 1130,940 1180,855 1210,810 1245,770 1270,730 1300,690 1330,652 1370,630 1400,610 1440,580 1478,555'
    });
    dashes(g, f, [
        [CRIMSON, '427,10 447,32 460,65 490,120 525,195 555,275 580,340 610,405 640,465 660,510 680,550 695,562 715,567 740,585 760,597 770,597'],
        [YELLOW, '772,597 900,597'],
        [CRIMSON, '900,599 940,608'],
        [YELLOW, '940,608 1270,608'],
        [TREND, '1270,606 1290,598 1310,585 1330,578'],
        [YELLOW, '1330,578 1350,578'],
        [TREND, '1370,573 1390,571 1420,558 1440,545 1478,540']
    ]);
    // x high top bottom low up
    `118 0 0 8 18 0;130 5 16 32 42 0;142 8 37 42 50 0;157 5 18 43 46 1;169 5 11 14 31 1;182 5 13 30 36 0;196 25 30 43 46 0;208 28 37 43 46 1;220 5 13 35 40 1;235 0 0 5 25 1;248 0 0 5 13 1;275 0 0 5 20 1;325 0 5 15 31 0;340 8 14 43 48 0;352 32 38 68 74 0;364 65 67 100 125 0;379 100 111 152 171 0;391 95 107 173 182 1;406 69 85 97 113 0;418 76 102 105 110 0;430 94 100 124 131 0;445 117 121 230 236 0;457 393 445 497 615 0;469 388 403 518 524 1;484 354 397 443 455 0;496 427 439 485 530 0;508 421 479 505 520 1;523 421 421 570 590 0;535 522 571 622 632 0;550 617 626 860 873 0;562 594 670 782 823 1;574 590 682 787 797 0;589 738 760 794 861 1;601 697 737 742 773 1;613 697 721 723 780 1;628 718 727 790 799 0;640 760 763 832 857 0;652 853 853 890 923 0;667 819 871 884 893 1;679 830 880 886 897 1;694 624 690 842 859 1;706 565 589 710 755 1;718 622 662 666 693 1;733 655 655 752 755 0;745 654 700 727 750 1;757 590 658 785 791 0;772 713 716 797 811 0;784 773 799 886 893 0;796 857 862 898 926 0;811 864 892 923 948 0;823 873 883 944 962 0;838 948 955 1145 1145 0;850 1056 1114 1145 1145 0;967 1110 1142 1145 1145 1;982 923 964 1118 1124 1;994 900 922 989 1056 0;1006 887 982 1015 1034 0;1021 952 955 1016 1020 1;1033 934 964 989 1015 0;1045 927 967 989 1002 1;1060 920 965 970 996 1;1072 868 877 965 985 1;1084 807 809 878 899 1;1099 690 712 806 818 1;1111 698 712 731 758 0;1126 668 673 731 742 1;1138 636 658 673 684 1;1150 657 659 670 774 0;1165 652 664 680 711 1;1177 630 649 664 678 1;1189 648 652 698 734 0;1204 658 667 722 758 1;1216 601 607 667 713 1;1228 595 605 617 646 1;1243 560 565 605 615 1;1255 524 562 569 597 0;1270 546 550 565 578 1;1282 481 499 550 560 1;1294 460 487 523 530 0;1309 490 515 523 558 1;1321 475 482 514 535 1;1333 495 497 580 608 0;1348 562 571 584 637 1;1360 553 553 590 641 1;1372 497 514 553 577 1;1387 507 530 535 545 0;1399 505 507 535 552 1;1414 460 481 505 520 1;1426 457 460 505 507 1;1438 438 457 467 483 0;1453 465 475 535 557 0;1465 503 514 535 552 1;1477 497 502 530 547 0;1492 487 487 535 551 1`
        .split(';').forEach(row => candle(g, f, ...row.split(' ').map(Number)));

    // Flag
    el(g, 'polygon', { points: toPoints(f, parse('1375,477 1428,426 1530,519 1477,570')), fill: '#eee882', 'fill-opacity': 0.35 });
    line(g, f, '1428,426 1530,519', '#ff0000', 2);
    line(g, f, '1375,477 1477,570', '#ff0000', 2);

    // MACD
    box(svg, 557, 720, 1030, 1, GRID);
    box(svg, 557, 875, 1030, 1, GRID);
    box(svg, 557, 779, 987, 2, '#c8c8d0');
    const joined = (first, second, color) => el(svg, 'polyline', {
        points: toPoints(a, parse(first)) + ' ' + toPoints(b, parse(second)), fill: 'none', stroke: color
    });
    joined('65,171 77,171 90,177 105,184 128,188 142,188 155,195 167,204 180,202 192,183 205,174 220,175 246,177 258,193 271,210 285,228 297,215 310,190 323,171 335,162 347,159 362,164 375,161 390,164 428,164 440,161 455,170 475,180 490,180 515,174 530,179 543,185 553,183 567,169 580,159 592,172 605,204 617,232 630,252 657,258 672,252 685,233 697,211 711,200 722,204 747,244 760,269 773,276 787,272 800,263 812,258 835,258 850,252 865,233 877,218 902,218 917,208 930,193 942,174 955,168 980,166 1006,153 1018,172 1030,198 1043,238 1058,270 1071,296 1083,308 1098,293 1110,255 1121,230 1136,246 1148,340 1160,413 1174,454 1187,403 1198,380 1214,372 1225,350 1241,369 1262,344 1278,318 1290,302 1315,250 1328,240 1340,248 1367,258 1382,214 1392,165 1405,116 1420,116 1445,160 1458,178 1470,220 1483,263 1497,291 1510,291 1524,300',
        '12,365 24,427 38,438 50,365 62,317 75,315 89,299 101,235 113,160 127,97 140,75 153,60 165,42 179,57 192,90 204,122 217,143 229,153 241,147 256,124 268,96 282,80 293,83 306,95 320,112 333,135 347,155 371,183 385,165 410,140 425,131 445,126 463,126 475,142 487,170 499,188 512,221 525,215 540,198 565,172 588,147 604,152 616,176 628,201 641,204', '#000080');
    joined('65,180 77,180 90,177 115,174 165,184 180,191 192,191 205,188 220,188 235,185 270,185 310,195 323,195 335,192 350,192 362,188 390,170 405,165 425,163 455,163 475,167 515,170 553,178 592,175 605,180 630,194 657,212 690,240 711,238 748,228 787,236 800,240 835,262 850,264 865,261 877,251 902,240 930,225 968,195 992,184 1006,173 1018,168 1032,170 1045,180 1071,207 1083,224 1110,255 1121,261 1136,266 1148,282 1174,317 1200,344 1214,353 1241,386 1251,386 1262,380 1278,363 1290,347 1313,324 1340,290 1367,269 1382,255 1405,218 1430,190 1445,175 1458,168 1470,162 1480,166 1497,187 1510,207 1524,228',
        '12,255 24,291 38,324 50,342 62,348 89,353 101,344 115,317 127,278 153,193 165,162 179,130 192,100 204,87 219,87 229,93 241,101 256,107 268,116 282,119 293,117 333,108 347,110 360,117 371,126 385,139 399,148 412,153 425,155 463,147 475,142 487,141 499,145 512,156 550,182 565,188 588,188 604,182 616,176 628,173 641,173', '#a0522d');

    // Histogram
    box(svg, 557, 903, 987, 1, '#d2d2d2');
    box(svg, 557, 942, 987, 1, '#d2d2d2');
    box(svg, 557, 923, 987, 1, GRID);
    const bars = (fr, str) => parse(str).forEach(([x, y]) => {
        const [px, py] = fr(x, y);
        box(svg, px - 1, Math.min(py, 924), 2, Math.abs(py - 924), py > 924 ? '#ff0000' : '#000');
    });
    bars(a, '65,606 77,603 89,594 104,591 115,600 127,585 142,585 154,612 166,606 180,576 192,600 204,570 219,552 231,543 246,516 257,657 269,639 284,648 296,591 308,606 323,591 334,588 346,582 361,597 373,579 388,582 399,561 411,504 426,555 438,579 450,576 464,579 476,576 488,561 503,564 515,510 530,537 541,534 553,531 568,525 580,552 592,612 607,618 618,618 630,642 645,651 657,657 672,654 683,651 695,651 710,645 722,663 734,675 749,687 760,690 772,681 787,678 799,687 814,705 825,714 837,714 852,684 864,684 876,687 891,690 902,693 914,681 929,687 941,687 956,690 967,696 979,672 994,651 1006,639 1018,645 1033,660 1044,669 1056,672 1071,687 1083,660 1098,654 1109,675 1121,690 1136,747 1148,864 1160,750 1174,750 1186,741 1198,729 1213,732 1225,726 1240,744 1251,714 1263,717 1278,705 1290,699 1302,696 1317,699 1328,696 1340,711 1355,717 1367,726 1382,717 1393,696 1405,657 1420,678 1432,663 1444,663 1459,660 1470,657 1482,651 1497,630 1509,648 1524,651');
    bars(b, '12,684 24,681 38,675 50,669 62,684 76,681 88,678 100,666 115,702 127,732 141,684 153,672 165,684 180,657 191,657 203,639 218,636 230,622 241,606 256,573 268,549 282,567 294,579 306,585 321,573 332,573 344,585 359,591 371,591 382,591 397,594 409,591 424,585 435,579 447,576 462,570 474,555 485,573 500,576 512,585 524,579 538,597 550,594 565,588 577,585 588,585 603,588 615,588 627,606 641,594');
    copyright(svg, 561, 1003);

    axisLines(svg, 557, 1546, 344, 1013);
    priceAxis(svg, p, 1430, [[148, ''], [190, ''], [233, '54.00'], [277, '52.00'], [323, '50.00'], [371, '48.00'], [419, '46.00'], [470, '44.00'], [524, '42.00'], [641, '38.00'], [704, '36.00'], [770, '34.00'], [838, '32.00'], [914, '30.00'], [992, '28.00'], [1076, '26.00'], [1168, '24.00']]);
    priceAxis(svg, b, 1430, [[22, ''], [79, '4'], [136, '2'], [193, '0'], [248, '-2'], [305, '-4'], [361, '-6'], [419, '-8'], [472, ''], [509, '4'], [566, '2'], [626, '0'], [683, '-2'], [740, '-4'], [797, '-6'], [857, '-8']]);
    timeAxis(svg, a, 895, [[268, 'Dec'], [540, '20'], [824, 'Feb'], [1082, 'Mar'], [1365, 'Apr']]);
    timeAxis(svg, b, 895, [[113, 'May'], [380, 'Jun'], [663, 'Jul'], [960, 'Aug'], [1228, 'Sep']]);
    priceTag(svg, 1540, 503, '39.65', '#ffff00', '');
}

drawMinute240();
drawMinute15();
drawTick1000();
drawWeekly();
drawDaily();
```
